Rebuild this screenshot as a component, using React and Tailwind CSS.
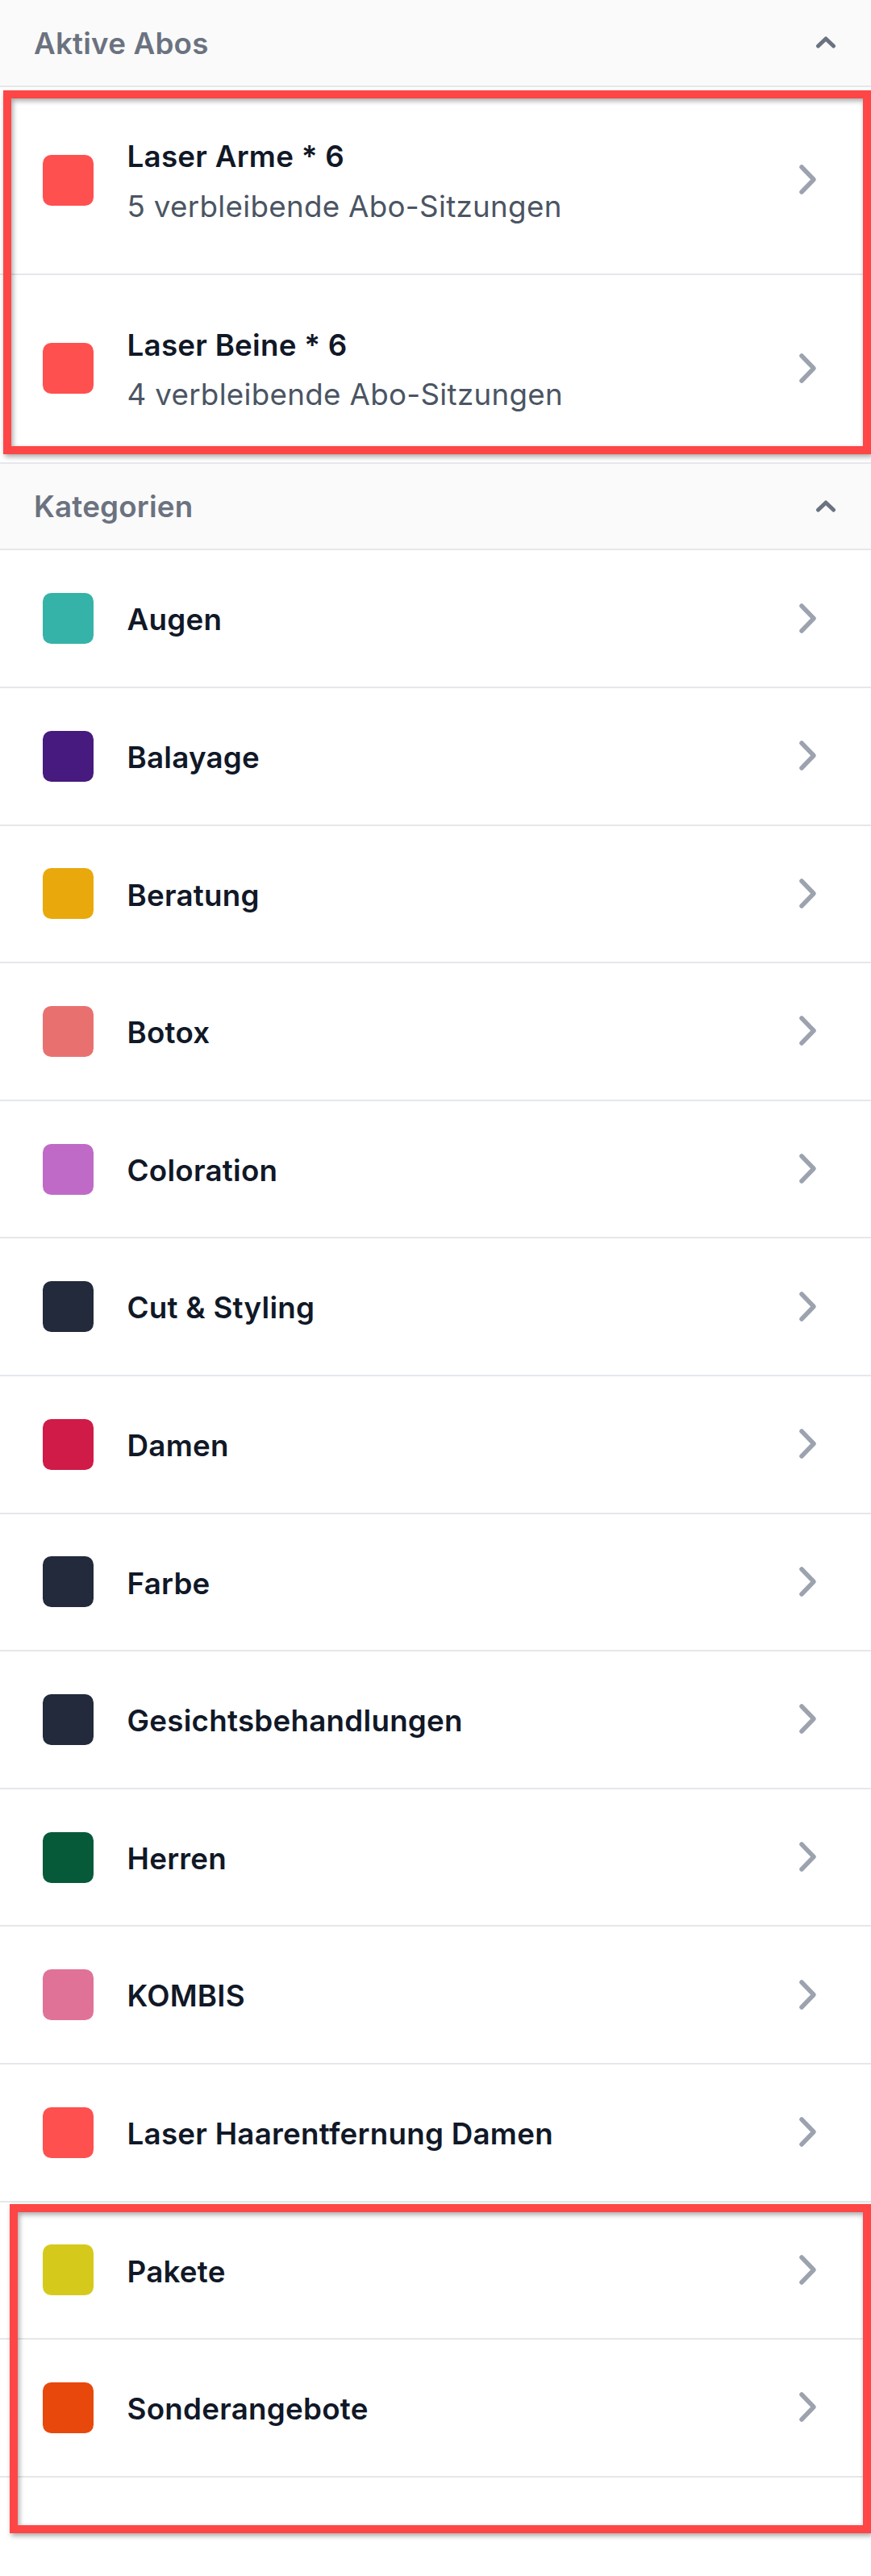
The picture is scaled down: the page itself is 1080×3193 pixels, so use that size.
const abos = [
  { name: 'Laser Arme * 6', sub: '5 verbleibende Abo-Sitzungen', swatch: 'bg-[#ff5050]' },
  { name: 'Laser Beine * 6', sub: '4 verbleibende Abo-Sitzungen', swatch: 'bg-[#ff5050]' },
];

const kategorien = [
  { name: 'Augen', swatch: 'bg-[#36b3a8]' },
  { name: 'Balayage', swatch: 'bg-[#461a7e]' },
  { name: 'Beratung', swatch: 'bg-[#e9a90c]' },
  { name: 'Botox', swatch: 'bg-[#e87170]' },
  { name: 'Coloration', swatch: 'bg-[#c06ac8]' },
  { name: 'Cut & Styling', swatch: 'bg-[#222a3c]' },
  { name: 'Damen', swatch: 'bg-[#d01a47]' },
  { name: 'Farbe', swatch: 'bg-[#222a3c]' },
  { name: 'Gesichtsbehandlungen', swatch: 'bg-[#222a3c]' },
  { name: 'Herren', swatch: 'bg-[#065a3a]' },
  { name: 'KOMBIS', swatch: 'bg-[#e07298]' },
  { name: 'Laser Haarentfernung Damen', swatch: 'bg-[#ff5050]' },
  { name: 'Pakete', swatch: 'bg-[#d5ca1c]' },
  { name: 'Sonderangebote', swatch: 'bg-[#e8480c]' },
];

const ChevronUp = () => (
  <svg width="30" height="20" viewBox="0 0 30 20" fill="none" className="shrink-0">
    <polyline points="5.5,14 15,5 24.5,14" stroke="#6b7280" strokeWidth="5" strokeLinecap="round" strokeLinejoin="round" />
  </svg>
);

const ChevronRight = () => (
  <svg width="26" height="42" viewBox="0 0 26 42" fill="none" className="shrink-0">
    <polyline points="5,5 20,20.5 5,36" stroke="#9ca3af" strokeWidth="5.5" strokeLinecap="round" strokeLinejoin="round" />
  </svg>
);

const SectionHeader = ({ title }) => (
  <div className="flex h-[107.6px] items-center justify-between border-b-[2.6px] border-[#e5e7eb] bg-[#fafafa] pl-[42px] pr-[41px]">
    <span className="pt-[2px] text-[36.75px] leading-[52.5px] font-semibold tracking-[0.2px] text-[#6b7280]">{title}</span>
    <ChevronUp />
  </div>
);

const Row = ({ item, tall }) => (
  <div
    className={`flex items-center border-b-[2.6px] border-[#e5e7eb] bg-white pl-[52.5px] pr-[65px] ${
      tall ? 'h-[233.6px]' : 'h-[170.6px]'
    }`}
  >
    <div className={`h-[63px] w-[63px] shrink-0 rounded-[10.5px] ${item.swatch}`} />
    <div className="ml-[42px] flex flex-1 flex-col pt-[4px] tracking-[0.25px]">
      <span className="text-[36.75px] leading-[52.5px] font-semibold text-[#111827]">{item.name}</span>
      {item.sub && (
        <span className="mt-[9px] text-[36.75px] leading-[52.5px] tracking-[0.3px] text-[#4b5563]">{item.sub}</span>
      )}
    </div>
    <ChevronRight />
  </div>
);

export default function App() {
  return (
    <div className="relative min-h-[3193px] w-[1080px] overflow-hidden bg-white font-['Inter',sans-serif]">
      <SectionHeader title="Aktive Abos" />
      {abos.map((a) => (
        <Row key={a.name} item={a} tall />
      ))}
      <SectionHeader title="Kategorien" />
      {kategorien.map((k) => (
        <Row key={k.name} item={k} />
      ))}

      {/* Markierungen */}
      <div className="pointer-events-none absolute left-[4px] top-[112px] h-[451px] w-[1076px] border-[10px] border-[#ff4646] drop-shadow-[2px_3px_3px_rgba(0,0,0,0.35)]" />
      <div className="pointer-events-none absolute left-[12px] top-[2732px] h-[408px] w-[1068px] border-[10px] border-[#ff4646] drop-shadow-[2px_3px_3px_rgba(0,0,0,0.35)]" />
    </div>
  );
}
